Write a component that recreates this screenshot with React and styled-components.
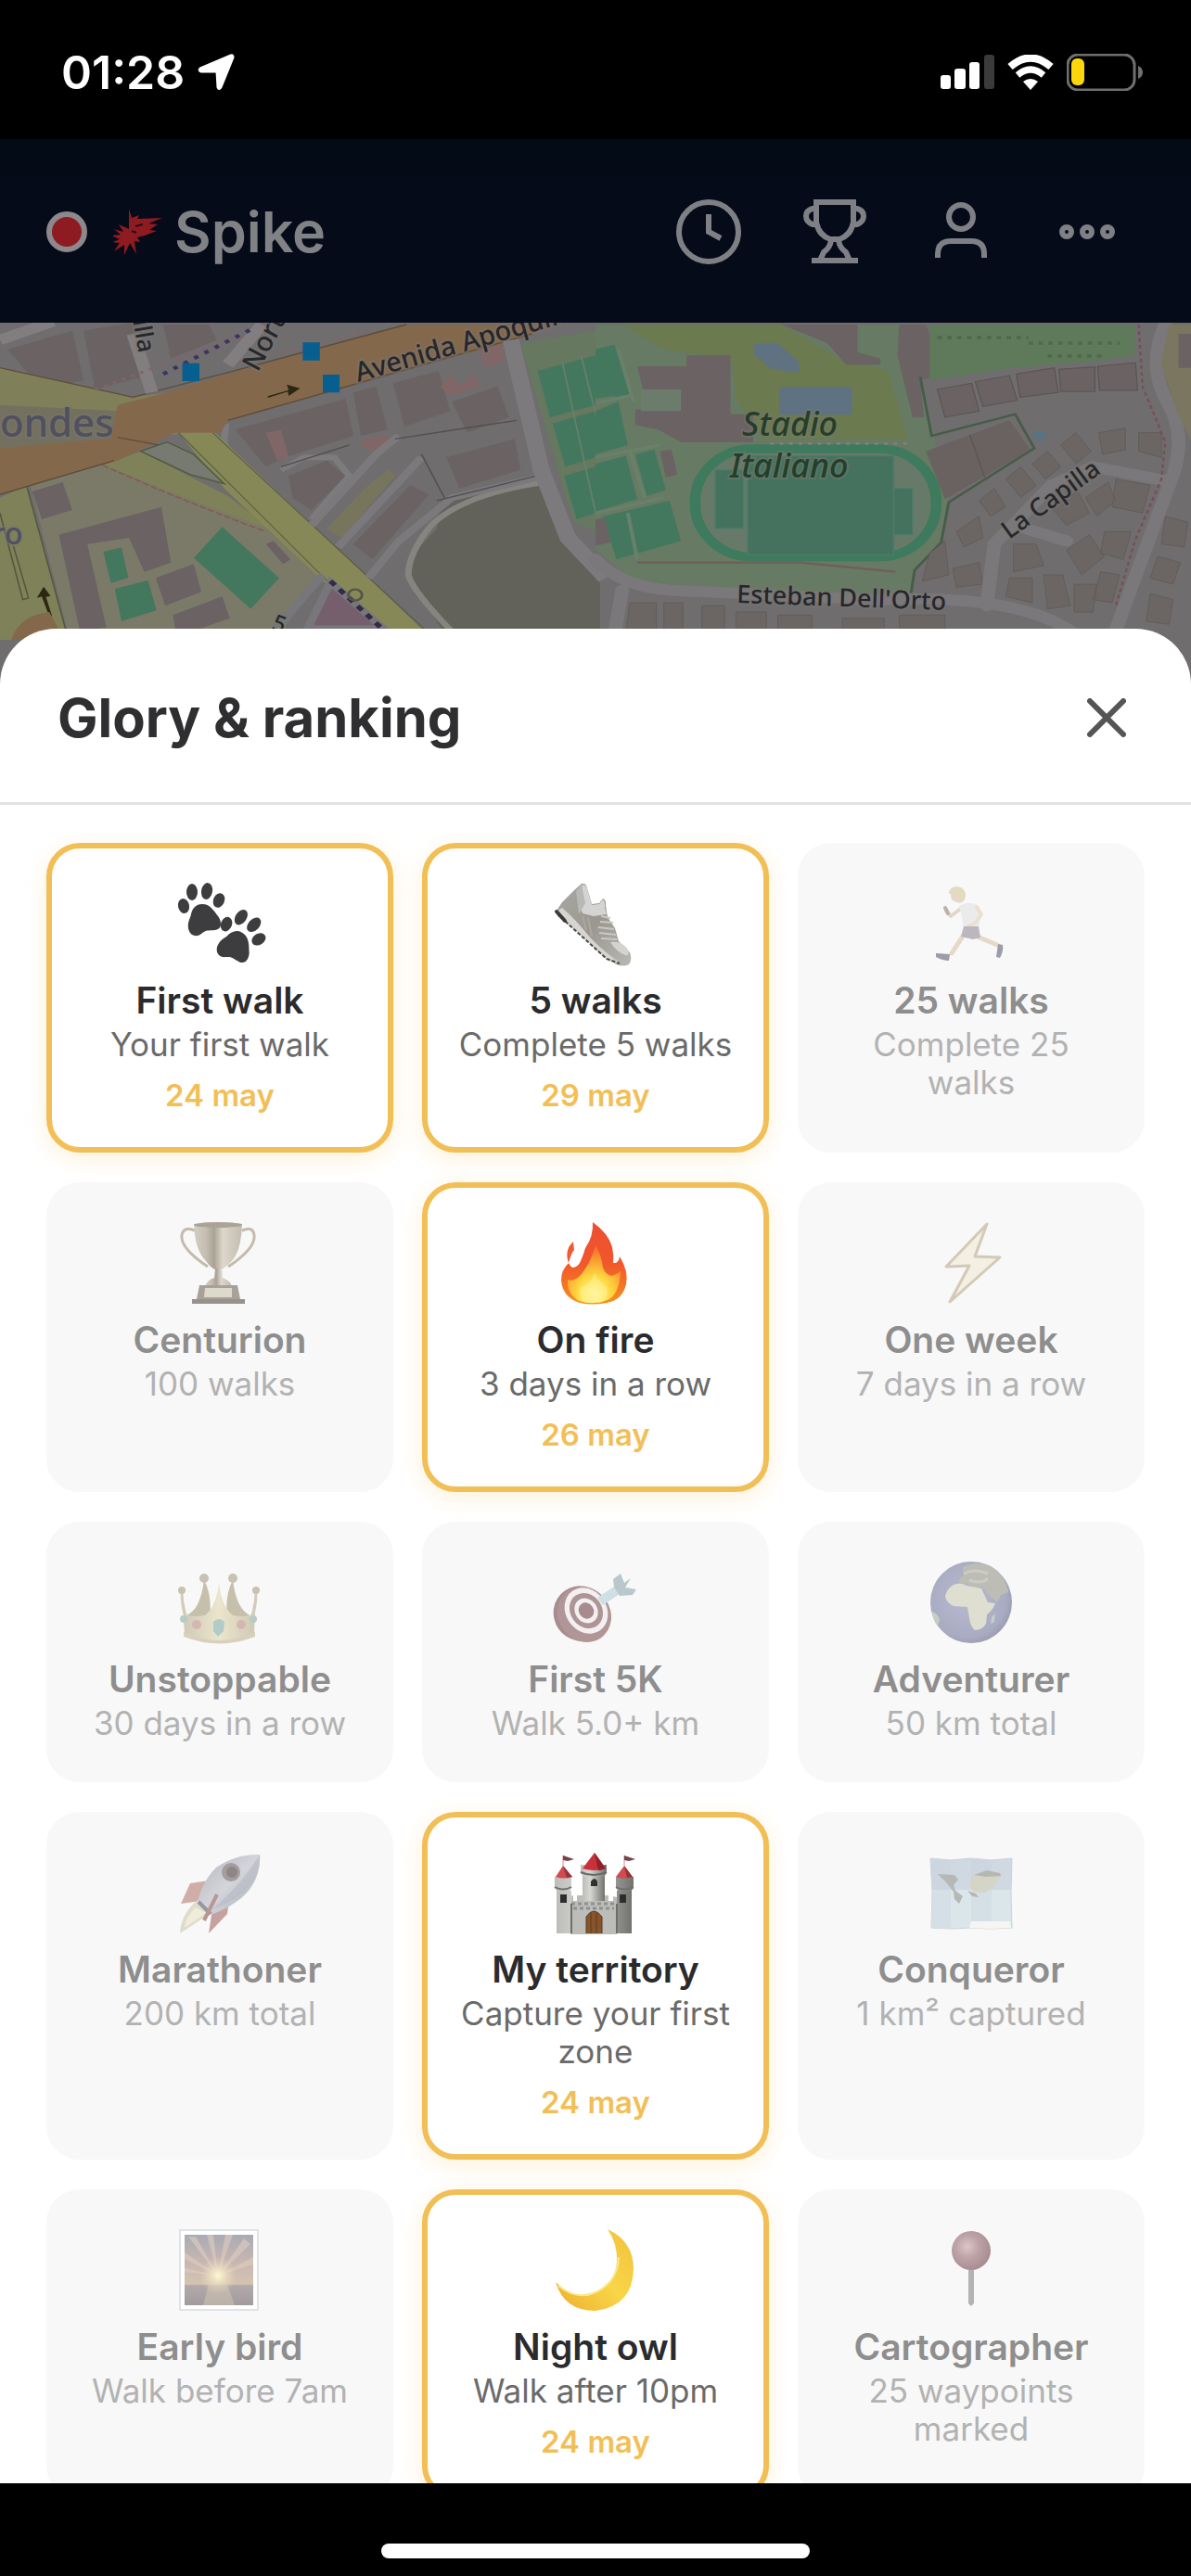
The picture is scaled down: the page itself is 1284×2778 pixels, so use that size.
import React from 'react';
import styled, { createGlobalStyle } from 'styled-components';

const GlobalStyle = createGlobalStyle`
  * {
    box-sizing: border-box;
  }

  body {
    margin: 0;
    background: #000;
    font-family: 'Inter', 'Liberation Sans', sans-serif;
  }

  h1, h2, h3, p, ul {
    margin: 0;
    padding: 0;
  }
`;

/* ---------- Achievement icons, all on an 88px grid ---------- */

const Paw = () => (
  <>
    <path d="M25 23c9 0 13 8 17 13s5 14-3 15-9-1-15 4-13 1-14-6 2-10 3-15 4-11 12-11z" />
    <ellipse cx="5" cy="25" rx="6" ry="8" transform="rotate(-12 5 25)" />
    <ellipse cx="14" cy="10" rx="6" ry="9" />
    <ellipse cx="30" cy="9" rx="6" ry="9" transform="rotate(10 30 9)" />
    <ellipse cx="43" cy="19" rx="6" ry="8" transform="rotate(24 43 19)" />
  </>
);

const PawsIcon = () => (
  <g fill="#3d3d3f">
    <Paw />
    <g transform="translate(38 30) rotate(34 26 33)">
      <Paw />
    </g>
  </g>
);

const ShoeIcon = () => (
  <>
    <defs>
      <linearGradient id="shoe" x1="0" y1="0" x2="1" y2="1">
        <stop offset="0" stopColor="#aaa9a5" />
        <stop offset=".5" stopColor="#99978f" />
        <stop offset="1" stopColor="#b9b8b4" />
      </linearGradient>
    </defs>
    <path d="M2 30L8 21 21 8 29 1q5-1 6 5l5 17 8-1 4-5q4 2 3 8l2 12 8 12 4 14 12 12q3 8-1 13-6 3-14 0L40 67 14 44 3 36z" fill="url(#shoe)" />
    <path d="M30 2q4 0 5 5l5 17 8-1 4-5q3 3 2 9l2 7-14 2-12-3-5-13z" fill="#d4d4d3" />
    <path d="M23 9l6-7 4 20-7 12z" fill="#b8b8b6" />
    <path d="M8 27q14 12 26 27t36 32q-8 1-14-3L34 62 14 44 3 35q0-6 5-8z" fill="#d6d5d1" />
    <path d="M3 33l11 11 20 18 22 20 14 5" fill="none" stroke="#4b4945" strokeWidth="2" strokeDasharray="4 2" />
    <path d="M2 31l9 10" stroke="#3a3a3a" strokeWidth="4" strokeLinecap="round" />
    <path d="M50 36l10 2M49 42l14 1M47 48l17 2M48 54l18 2M50 60l17 1" stroke="#c9c8c3" strokeWidth="2" />
    <path d="M60 64q12-2 19 8 2 8-3 6-10-4-16-14z" fill="#d4d3cf" />
    <path d="M36 38l4 20M30 36l4 15" stroke="#aaa89f" strokeWidth="2" />
  </>
);

const RunnerIcon = () => (
  <>
    <path d="M36 56l-13 20" stroke="#e6d9c8" strokeWidth="5" strokeLinecap="round" />
    <path d="M48 57l24 10" stroke="#e6d9c8" strokeWidth="5" strokeLinecap="round" />
    <path d="M34 27l-12 9-5-6" fill="none" stroke="#e0d5c8" strokeWidth="4" strokeLinecap="round" strokeLinejoin="round" />
    <path d="M16 27l3 6" stroke="#b9b3ac" strokeWidth="4" strokeLinecap="round" />
    <path d="M31 25q10-6 20-1l3 14-3 14q-9 3-15-2l-2-13z" fill="#ecebeb" />
    <path d="M50 26l5 8-6 9-8 4" fill="none" stroke="#eae0d2" strokeWidth="4" strokeLinecap="round" strokeLinejoin="round" />
    <path d="M36 47h16l2 12-8 2-13-3z" fill="#bab7be" />
    <circle cx="29" cy="14" r="7" fill="#e6d7c7" />
    <path d="M20 12q0-8 9-8 9 1 9 10-1 8-8 8l2-7-4-3z" fill="#e0dcc0" />
    <path d="M6 76l15 1-1 7q-7 0-14-4z" fill="#9c9da8" />
    <path d="M73 66l5 1q1 7-3 14l-4-1z" fill="#9c9da8" />
  </>
);

const CupIcon = () => (
  <>
    <defs>
      <linearGradient id="cup" x1="0" x2="1">
        <stop offset="0" stopColor="#d3cdc2" />
        <stop offset=".25" stopColor="#c5beb1" />
        <stop offset=".42" stopColor="#aaa296" />
        <stop offset=".6" stopColor="#ddd8cb" />
        <stop offset="1" stopColor="#c3bcb0" />
      </linearGradient>
    </defs>
    <path d="M17 9Q5 4 3 14q-2 14 28 34M68 9q12-5 13 5 2 14-28 34" fill="none" stroke="#c3bbac" strokeWidth="3" />
    <path d="M16 2q26-4 52 0-1 30-12 41-8 7-10 8h-7q-4-1-10-9Q17 30 16 2z" fill="url(#cup)" />
    <ellipse cx="42" cy="3" rx="26" ry="3" fill="#aba396" />
    <path d="M39 50h7l1 10q8 3 10 9H28q3-7 10-9z" fill="url(#cup)" />
    <path d="M22 68h41l3 15H19z" fill="#a8a199" />
    <path d="M28 71h29v10H27z" fill="#ddd9cb" />
    <path d="M14 83h57v5H14z" fill="#99928c" />
  </>
);

const FireIcon = () => (
  <>
    <defs>
      <linearGradient id="fire" x1="0" y1="0" x2="0" y2="1">
        <stop offset="0" stopColor="#ec4f32" />
        <stop offset=".5" stopColor="#f2562b" />
        <stop offset="1" stopColor="#f5921f" />
      </linearGradient>
      <radialGradient id="flame" cx=".5" cy=".85" r=".8">
        <stop offset="0" stopColor="#fffbc0" />
        <stop offset=".4" stopColor="#ffd83e" />
        <stop offset="1" stopColor="#f5702b" />
      </radialGradient>
    </defs>
    <path d="M41 0q17 12 21 27 2 9 1 17 6 1 7-7 10 16 7 30-4 17-21 20-16 3-29 0Q8 81 7 62q0-10 8-18 2 4 4 5 6 0 9-7 3-7 5-14 9-13 8-28z" fill="url(#fire)" />
    <path d="M20 21q-10 9-5 23 3-11 6-14z" fill="#ee5b34" />
    <path d="M44 25q5 8 7 18 1 13 10 15 7-2 10-5-1 25-14 31-15 6-31 1-13-8-12-23 7 3 15-6 10-13 15-31z" fill="url(#flame)" />
    <path d="M43 55q6 11 13 15 3 13-7 17H34q-10-5-6-17 11-2 15-15z" fill="#fff28a" opacity=".6" />
  </>
);

const BoltIcon = () => (
  <path d="M61 2L17 48l25-1-21 39 54-48-27-1z" fill="#f3efe3" stroke="#d3c9b6" strokeWidth="3" strokeLinejoin="round" />
);

const CrownIcon = () => (
  <>
    <defs>
      <linearGradient id="crown" x1="0" x2="1">
        <stop offset="0" stopColor="#cfc8b4" />
        <stop offset=".5" stopColor="#ebe5cd" />
        <stop offset="1" stopColor="#cfc8b4" />
      </linearGradient>
    </defs>
    <path d="M8 58q15-6 19-38 9 16 6 44zM77 58Q62 52 58 20q-9 16-6 44z" fill="#c6bfab" />
    <path d="M3 32l5 26q10 2 20 0 12-9 15-35 3 26 15 35 10 2 20 0l5-26-2 46q-38 18-75 0z" fill="url(#crown)" />
    <path d="M3 30q0 22 5 30M83 30q0 22-5 30" fill="none" stroke="#d3ccba" strokeWidth="3" />
    <g fill="#c8c2b3">
      <circle cx="27" cy="18" r="5" />
      <circle cx="58" cy="18" r="5" />
      <circle cx="3" cy="31" r="4" />
      <circle cx="83" cy="31" r="4" />
    </g>
    <path d="M5 76q38 18 77 0v5q-38 15-77 0z" fill="#d7d0bc" />
    <path d="M37 65q6-6 12 0l-1 10-6 6-5-6z" fill="#b0cbc8" />
    <circle cx="19" cy="68" r="5" fill="#d4b7b3" />
    <circle cx="67" cy="68" r="5" fill="#d4b7b3" />
    <circle cx="5" cy="62" r="4" fill="#b6ccc4" />
    <circle cx="80" cy="62" r="4" fill="#b6ccc4" />
  </>
);

const TargetIcon = () => (
  <>
    <ellipse cx="28" cy="56" rx="29" ry="30" transform="rotate(-35 28 56)" fill="#a98c8f" />
    <ellipse cx="32" cy="57" rx="28" ry="31" transform="rotate(-35 32 57)" fill="#b19698" />
    <ellipse cx="34" cy="53" rx="22" ry="26" transform="rotate(-35 34 53)" fill="#f4f0f1" />
    <ellipse cx="34" cy="53" rx="17" ry="20" transform="rotate(-35 34 53)" fill="#ad9596" />
    <ellipse cx="34" cy="53" rx="12" ry="14" transform="rotate(-35 34 53)" fill="#f4f0f1" />
    <ellipse cx="34" cy="53" rx="8" ry="9" transform="rotate(-35 34 53)" fill="#a88b8e" />
    <path d="M46 39l21-14 3 10-18 12z" fill="#d0dfe3" />
    <path d="M64 28l-1-9 8-6 4 10 7-5-6 10 12 2-4 6-14 1z" fill="#b9c8cd" />
  </>
);

const GlobeIcon = () => (
  <>
    <defs>
      <radialGradient id="sea" cx=".45" cy=".45" r=".6">
        <stop offset="0" stopColor="#b8bbd0" />
        <stop offset=".8" stopColor="#a9abc2" />
        <stop offset="1" stopColor="#9698ab" />
      </radialGradient>
    </defs>
    <circle cx="44" cy="44" r="44" fill="url(#sea)" />
    <path d="M30 21l6-7-1-8q15-7 30-1 16 10 19 28l-8 3-4 8-10-9-6-8-9 1-8-5-6 1z" fill="#bdbdb5" />
    <path d="M16 38q1-8 9-13 8-3 14 1l16 3 7 15 8 1q-3 8-9 12l-1 10q-4 7-12 7-5-4-6-13l-2-12-15-1q-7-3-9-10z" fill="#dedfd0" />
    <path d="M2 54q6 2 8 8l-2 8q-6-8-6-16zM66 60l4-4-1 9-4 2z" fill="#c6cdc4" />
    <path d="M36 13q12-6 26 0M42 20q14 5 20-2" fill="none" stroke="#cbccc3" strokeWidth="3" />
  </>
);

const RocketIcon = () => (
  <>
    <defs>
      <linearGradient id="rocket" x1="0" y1="0" x2="1" y2="1">
        <stop offset="0" stopColor="#b3b4bb" />
        <stop offset=".5" stopColor="#d3d5db" />
        <stop offset="1" stopColor="#a9abb4" />
      </linearGradient>
    </defs>
    <path d="M12 34l20-3-9 22-21 3z" fill="#d0aea7" />
    <path d="M36 62l18-9-2 14-20 21z" fill="#c5a29f" />
    <path d="M20 52Q2 67 1 88q14-9 33-22z" fill="#dedccb" />
    <path d="M18 60Q7 70 6 82q12-8 23-16z" fill="#efedd9" />
    <path d="M87 3q2 28-20 47Q50 63 34 68L20 54q5-22 20-37Q62 2 87 3z" fill="url(#rocket)" />
    <path d="M87 3q2 20-15 39-16 13-36 20 30-25 51-59z" fill="#b7b9c3" opacity=".6" />
    <circle cx="56" cy="22" r="10" fill="#a49c9d" />
    <circle cx="57" cy="22" r="6" fill="#8e8588" />
    <path d="M21 54l13 13" stroke="#96979d" strokeWidth="4" />
    <path d="M41 46l-14 28" stroke="#b89795" strokeWidth="4" />
  </>
);

const CastleIcon = () => (
  <>
    <defs>
      <linearGradient id="stone" x1="0" x2="1">
        <stop offset="0" stopColor="#bcbdb8" />
        <stop offset=".35" stopColor="#d6d6d2" />
        <stop offset="1" stopColor="#72736f" />
      </linearGradient>
    </defs>
    <path d="M17 48l3-1v6h4v-6h6v6h4v-6h14v6h5v-6h5v6h5v-5l4 1v40H17z" fill="#bcbdb9" />
    <path d="M18 56h48M20 61h44" stroke="#8e918f" strokeWidth="3" strokeDasharray="4 3" />
    <path d="M30 22h24v31H30z" fill="url(#stone)" />
    <path d="M28 14h28v9l-3 4H31l-3-4z" fill="url(#stone)" />
    <path d="M28 22q14 6 28 0" fill="none" stroke="#686965" strokeWidth="2" />
    <path d="M30 18L43 1l12 17q-12 4-25 0z" fill="#c9303a" />
    <path d="M43 1l12 17q-4 2-8 2z" fill="#8d222b" />
    <path d="M39 37v-5q4-6 7 0v5z" fill="#2f3030" />
    <path d="M2 42h16v46H2zM67 42h16v46H67z" fill="url(#stone)" />
    <path d="M0 27h18v12l-2 4H3l-3-4zM66 27h19v12l-3 4H69l-3-4z" fill="url(#stone)" />
    <path d="M0 38q9 5 18 0M66 38q9 5 19 0" fill="none" stroke="#70716c" strokeWidth="2" />
    <path d="M1 27l8-12 10 12q-9 3-18 0zM66 27l9-12 9 12q-9 3-18 0z" fill="#cf4a51" />
    <path d="M9 15l10 12-6 1zM75 15l9 12-6 1z" fill="#96333a" />
    <path d="M9 15V4M75 15V4" stroke="#d98b90" strokeWidth="1" />
    <path d="M9 4l12 4-7 2-5-1zM75 4l12 4-7 2-5-1z" fill="#774249" />
    <path d="M6 46h7v9H6zM70 46h7v9h-7z" fill="#2c2d2d" />
    <path d="M18 56v32M67 56v32" stroke="#6d6f6a" strokeWidth="2" />
    <path d="M34 88V70q8-12 17 0v18z" fill="#87552c" />
    <path d="M34 88V70q8-12 17 0v18M39 88V66M45 88V66" fill="none" stroke="#5c3a20" strokeWidth="1" />
  </>
);

const WorldMapIcon = () => (
  <>
    <path d="M0 7l22 2 22-2 22 2 22-2-1 37 1 38-22 1-22-1-22 1-21-1 1-38z" fill="#dbe6eb" stroke="#ccd2d6" />
    <path d="M0 7l22 2v74l-21-1 1-38zM44 7l22 2v74l-22-1z" fill="#d4dfe6" />
    <path d="M0 7l22 2 22-2 22 2 22-2-1 34H2z" fill="#c8d1dc" opacity=".6" />
    <path d="M42 82l2-7h42l1 7-21 1z" fill="#f5f5f4" />
    <path d="M8 24l18 1 4 5-5 6 2 6 8 6-4 8-5-5-1-8-8-10z" fill="#b5b8b4" />
    <path d="M42 36l5-11 14-4 17 3-5 6-5 8-9 6-12-1z" fill="#d4d5c6" />
    <path d="M47 25l14-5 14 3 1 3-16 1zM40 42l9 3 3 4-7-1z" fill="#b5b8b1" />
  </>
);

const SunriseIcon = () => (
  <>
    <defs>
      <linearGradient id="dawn" x1="0" y1="0" x2="0" y2="1">
        <stop offset="0" stopColor="#a9abb3" />
        <stop offset=".4" stopColor="#c8b7b2" />
        <stop offset=".7" stopColor="#d3c4b0" />
        <stop offset=".72" stopColor="#b3a9aa" />
        <stop offset="1" stopColor="#a19b9f" />
      </linearGradient>
      <radialGradient id="sun">
        <stop offset="0" stopColor="#fdfad5" />
        <stop offset="1" stopColor="#efdcb9" stopOpacity="0" />
      </radialGradient>
    </defs>
    <path d="M1 1h84v86H1z" fill="#fff" stroke="#dfe2e7" strokeWidth="2" />
    <path d="M6 6h74v76H6z" fill="url(#dawn)" />
    <path d="M42 50L6 32v-7zM42 50L10 8h8zM42 50L30 6h7zM42 50L50 6h8zM42 50L70 10l7 6zM42 50l38-20v8zM42 50L6 46v-4z" fill="#dfcdc0" opacity=".6" />
    <circle cx="42" cy="50" r="20" fill="url(#sun)" />
    <path d="M32 60h20l8 22H26z" fill="#dfd2b9" opacity=".4" />
  </>
);

const MoonIcon = () => (
  <>
    <defs>
      <linearGradient id="moon" x1="0" y1="1" x2="1" y2="0">
        <stop offset="0" stopColor="#ecae2d" />
        <stop offset=".5" stopColor="#f9d548" />
        <stop offset="1" stopColor="#f1c23b" />
      </linearGradient>
    </defs>
    <path d="M57 0q28 13 28 43-1 40-41 45Q10 88 1 57q18 18 37 14 27-8 29-36 1-19-10-35z" fill="url(#moon)" />
    <path d="M4 61q20 16 40 7 24-11 25-38" fill="none" stroke="#fbe98b" strokeWidth="2" />
  </>
);

const PinIcon = () => (
  <>
    <defs>
      <radialGradient id="pin" cx=".4" cy=".4" r=".6">
        <stop offset="0" stopColor="#dcc5c8" />
        <stop offset=".5" stopColor="#bda3a7" />
        <stop offset="1" stopColor="#a98d93" />
      </radialGradient>
    </defs>
    <path d="M41 44h6v36l-3 3-3-3z" fill="#b4b2b3" />
    <circle cx="44" cy="23" r="21" fill="url(#pin)" />
  </>
);

/* ---------- Map behind the sheet ---------- */

const CityMap = () => (
  <MapSvg viewBox="0 0 1284 390" preserveAspectRatio="xMidYMin slice" aria-hidden="true">
    <rect width="1284" height="390" fill="#6f6d6e" />
    {/* west side: avenue, school and reservoir */}
    <g transform="translate(0 -8) scale(.4095 .3333)">
      <path d="M80 550l190-70 430 210 150 140-140 250H190z" fill="#7b7a68" />
      <g fill="#6a6263">
        <path d="M20 110l170-60 30 160-110 30zM220 50l150-30 0 180-120 40zM430 30l120 0 20 50-120 60z" />
        <path d="M620 370l290-100 20 120-180 70-50 30zM930 250l60-20 30 140-70 20zM1035 220l120-40 30 130-120 50zM1190 280l120-50 30 100-110 50z" />
        <path d="M1175 460l180-60 15 100-160 60zM760 520l100-50 50 50-90 110-50-40zM930 740l150-190 50 30-150 210z" />
        <path d="M85 570l80-30 25 90-80 30zM155 710l270-90 25 180-70 30-40-110-110 20 50 270-70 10z" />
        <path d="M410 850l100-45 20 90-95 45zM455 970l130-60 20 70-140 60zM700 740l20-10 45 60-20 15z" />
      </g>
      <path d="M700 380l40-10 20 90-30 10zM945 410l70-25 15 30-60 25zM1160 230l30-40 20 40 40-40 10 40 70-20-150 50zM1255 80l70 0 0 70-50 20z" fill="#816668" />
      <path d="M640 560l-50-150 5-60M740 500l60-40 80 0 40 60-100 140" fill="none" stroke="#7d7b7d" strokeWidth="18" />
      <path d="M0 170l350 95 120-20 60 130-400 60L0 480z" fill="#7f8059" />
      <path d="M0 290l310 20v100L0 430z" fill="#74705f" />
      <path d="M270 485l100-45 230 145 240 225-140-120z" fill="#7f8259" />
      <path d="M470 380l80-20 560 654H985L590 560z" fill="#868957" />
      <path d="M470 380L1000 1030M560 380l570 650" stroke="#5b5c45" strokeWidth="3" />
      <path d="M0 590l70-40 110 500H0z" fill="#7f8259" />
      <path d="M70 550l110 500M0 640l60 280 15-5-40-170" fill="none" stroke="#55573e" strokeWidth="4" />
      <path d="M0 430l290-30 20-110 130-40 160-60 470-160h380l-60 40-400 130-100 40-290 100-20 40-120 0-150 90L0 580z" fill="#84684c" />
      <path d="M0 170l350 95 250-80L1070 30M0 580l300-110M600 340l800-280M310 395l130 30" fill="none" stroke="#5f4d38" strokeWidth="4" />
      <path d="M370 440l70-30 70 40 80 95-90-30z" fill="#777a70" stroke="#4f5a3c" strokeWidth="4" />
      <path d="M350 60l50 190M600 160l90-130M0 80l140-60" fill="none" stroke="#827e80" strokeWidth="34" />
      <path d="M270 485Q480 600 700 700" fill="none" stroke="#825d52" strokeWidth="5" strokeDasharray="18 6" />
      <path d="M250 240l400-180M740 120l230-70" stroke="#83636b" strokeWidth="8" strokeDasharray="10 16" />
      <path d="M430 190l240-150" stroke="#3f3263" strokeWidth="12" strokeDasharray="12 20" />
      <path d="M1160 600l270-60 60 190 90 120v220h-390L1080 850l10-80 60-80z" fill="#62625a" />
      <path d="M1435 540q-220 40-300 140-60 90-60 160 10 50 120 190" fill="none" stroke="#85847f" strokeWidth="17" />
      <path d="M820 680l170-230 60-60M890 750l220-290M970 850l80-120 140-140 240-70" fill="none" stroke="#7b797c" strokeWidth="22" />
      <path d="M740 490l180-70M1040 400l320-60M1110 450l60 140M1150 600l260-80" fill="none" stroke="#534f4f" strokeWidth="4" />
      <path d="M1345 80l80 420 70 220 100 130" fill="none" stroke="#7d7a7e" strokeWidth="44" />
      <path d="M860 690l100-130 60-60 20 20-140 200z" fill="#77765c" />
      <path d="M810 1014l60-150 140 150zM850 840l-140 200" fill="#755f6c" stroke="#77767a" strokeWidth="22" />
      <path d="M870 860l150 170" stroke="#322b45" strokeWidth="14" strokeDasharray="18 18" />
      <circle cx="935" cy="905" r="18" fill="none" stroke="#555547" strokeWidth="7" />
      <g fill="#43785f">
        <path d="M585 685l150 165-75 100-150-165zM272 765l48-14 18 98-46 18zM302 885l88-28 22 98-92 35z" />
      </g>
      <path d="M1370 90l200-40v650l-60-30-80-330z" fill="#66785f" />
      <path d="M1415 180l153-50v160l-120 40zM1455 350l113-40v150l-80 30zM1485 520l83-30v150l-50 20z" fill="#43785f" />
      <path d="M1480 150l90 500M1530 130l40 200" stroke="#69806b" strokeWidth="4" />
      <path d="M797 88h45v58h-45zM480 155h45v58h-45zM850 192h44v58h-44z" fill="#075f8f" />
      <path d="M705 262l55-20-5-18 35 12-30 25-2-14-53 20zM130 975l-20-65-13 4 18-36 18 30-12 3 16 62z" fill="#2b2710" />
      <path d="M30 1050q20-80 100-90l40 90z" fill="#84684c" />
    </g>
    {/* east side: sports club and houses */}
    <g transform="translate(642 -8) scale(.4095 .3333)">
      <path d="M0 30h870l-10 180 30 170 40 220-20 130-70 100-10 80-500-10L90 850 0 760z" fill="#677a63" />
      <path d="M70 30h420l150 110 130 40 50 220-380 0-70-130-10-130-180-30z" fill="#6c7a4f" />
      <path d="M420 90l60 0 55 60 0 35-70-10-50-50zM485 232h190v90H485z" fill="#5f7281" />
      <path d="M110 165h130v-35h115v190h60v90H225l-60-40-60-15v-50l120 0V240l-100 0z" fill="#6a6263" />
      <path d="M120 240h105v70H120z" fill="#6c7c6c" />
      <path d="M490 30h200v90l60 20 0 20h-90l-50-70zM800 30h70l45 160-60 20 10 120h-30l-40-200z" fill="#6a6263" />
      <path d="M880 30h540v100l-120 20-200 20-220 40z" fill="#5f7a5b" />
      <path d="M900 72h240M1140 90h240M1190 132h150" stroke="#4e6b49" strokeWidth="10" strokeDasharray="12 14" />
      <path d="M900 240l90-20 20 90-90 20zM1000 215l90-20 20 80-90 20zM1108 190l100-20 10 80-100 15zM1220 175l95-8 0 80-90 0zM1322 165l100-12 5 90-100 0z" fill="#6a6263" stroke="#5b5454" strokeWidth="3" />
      <path d="M855 200l30 190 220-70 50 110-225 175-20 130-70 90-10 80" fill="none" stroke="#465c48" strokeWidth="7" />
      <path d="M870 440l220-100 55 95-225 160z" fill="#6a6161" />
      <path d="M985 385l40 140" stroke="#5b5454" strokeWidth="3" />
      <g fill="#43785f">
        <path d="M0 110l50-15 40 160-30 15-10-10-50 10zM0 310l60-30 25 140L0 450zM0 480l80-25 30 140-110 40zM105 450l50-15 30 130-50 20zM20 650l175-50 30 130-170 60z" />
      </g>
      <path d="M0 285l90-25M0 460l170-40M0 640l180-50M60 110l40 170M90 440l40 150M85 640l25 150" stroke="#69806b" strokeWidth="10" />
      <rect x="262" y="432" width="635" height="350" rx="150" ry="172" fill="#677a69" stroke="#3e7a5d" strokeWidth="28" />
      <path d="M400 455h385v320H400zM315 500h75v190h-75zM785 560h50v150h-50z" fill="#44725e" stroke="#4f7c69" strokeWidth="4" />
      <path d="M460 415h370" stroke="#7f837b" strokeWidth="8" strokeDasharray="9 16" />
      <path d="M110 800h430l250 30" fill="none" stroke="#6f5f5a" strokeWidth="7" />
      <path d="M170 440l30-5 15 80-30 10zM0 660l25-5 15 80-40 10z" fill="#6a6263" />
      <g fill="#6b6564" stroke="#5f5955" strokeWidth="2">
        <path d="M1225 420l40-40 40 60-40 40zM1325 380l70-15 0 70-60 15zM1150 480l40-40 35 50-40 40zM1080 530l40-40 40 60-40 40zM1010 600l40-40 30 60-40 30zM950 700l60-50 10 70-50 30zM880 770l40-40 10 110-70 20zM940 820l70-20 10 70-70 10z" />
        <path d="M1200 620l70-50 30 70-60 40zM1290 590l60-50 20 60-50 50zM1370 530l90 20-20 90-80-20zM1100 740l60 0 20 70-80 20zM1240 760l60-50 40 70-60 60zM1340 700l70 0-20 90-60-20zM1090 850l60 0 0 80-70-20zM1180 840l50 0 20 100-60 10zM1260 870l60 0-10 90-50 0zM1330 830l50 10-20 90-50-10z" />
        <path d="M1480 780l60 20-20 70-60-20zM1460 900l60 20-10 80-60-10zM1500 650l60 20-10 80-60-10zM1430 380l60 0 0 80-60-20zM90 930l70 0 0 100-80 0zM180 930l50 0 0 100-50 0zM280 940l60 0 0 90-60 0zM370 960l80 0 0 70-80 0zM480 970l90 0 0 60-90 0zM650 980l110 0 0 50-110 0zM800 970l120 0 0 60-120 0z" />
      </g>
      <path d="M0 790q70 90 200 100l540 30q380-20 520 110M1500 30q-50 140 10 260 50 110 0 260l-150 500M1500 535l-190-45-110 60-150 190-20 200M1130 690l110 40M70 890l-20 140" fill="none" stroke="#7b787b" strokeWidth="36" strokeLinecap="round" />
      <path d="M1430 30l10 200 60 180-10 120-70 200-50 210" fill="none" stroke="#794f55" strokeWidth="6" strokeDasharray="12 10" />
      <path d="M1510 30h60v380l-40-100-40-150z" fill="#7a765f" />
      <path d="M1535 60h40v110h-40z" fill="#6a6263" />
      <circle cx="1170" cy="390" r="18" fill="#5c7280" />
    </g>
    <MapLabel $color="#50505f" $size={42} x="0" y="123">ondes</MapLabel>
    <MapLabel $color="#50505f" $size={32} x="-8" y="239">ro</MapLabel>
    <MapLabel $size={29} transform="translate(386 64) rotate(-16)">Avenida Apoquindo</MapLabel>
    <MapLabel $size={29} transform="translate(278 54) rotate(-62)">Norte</MapLabel>
    <MapLabel $size={26} transform="translate(136 -44) rotate(80)">Sevilla</MapLabel>
    <MapLabel $size={24} transform="translate(292 330) rotate(20)">5</MapLabel>
    <MapLabel $color="#243f29" $italic $size={36} x="800" y="122">Stadio</MapLabel>
    <MapLabel $color="#243f29" $italic $size={36} x="787" y="167">Italiano</MapLabel>
    <MapLabel $size={27} transform="translate(794 302) rotate(2)">Esteban Dell'Orto</MapLabel>
    <MapLabel $size={27} transform="translate(1088 234) rotate(-36)">La Capilla</MapLabel>
  </MapSvg>
);

const achievements = [
  { title: 'First walk', description: 'Your first walk', date: '24 may', Icon: PawsIcon },
  { title: '5 walks', description: 'Complete 5 walks', date: '29 may', Icon: ShoeIcon },
  { title: '25 walks', description: 'Complete 25 walks', Icon: RunnerIcon },
  { title: 'Centurion', description: '100 walks', Icon: CupIcon },
  { title: 'On fire', description: '3 days in a row', date: '26 may', Icon: FireIcon },
  { title: 'One week', description: '7 days in a row', Icon: BoltIcon },
  { title: 'Unstoppable', description: '30 days in a row', Icon: CrownIcon },
  { title: 'First 5K', description: 'Walk 5.0+ km', Icon: TargetIcon },
  { title: 'Adventurer', description: '50 km total', Icon: GlobeIcon },
  { title: 'Marathoner', description: '200 km total', Icon: RocketIcon },
  { title: 'My territory', description: 'Capture your first zone', date: '24 may', Icon: CastleIcon },
  { title: 'Conqueror', description: '1 km² captured', Icon: WorldMapIcon },
  { title: 'Early bird', description: 'Walk before 7am', Icon: SunriseIcon },
  { title: 'Night owl', description: 'Walk after 10pm', date: '24 may', Icon: MoonIcon },
  { title: 'Cartographer', description: '25 waypoints marked', Icon: PinIcon },
];

const AchievementCard = ({ title, description, date, Icon }) => (
  <Card $unlocked={Boolean(date)}>
    <BadgeIcon viewBox="0 0 88 88" aria-hidden="true">
      <Icon />
    </BadgeIcon>
    <CardTitle $unlocked={Boolean(date)}>{title}</CardTitle>
    <CardText $unlocked={Boolean(date)}>{description}</CardText>
    {date && <CardDate>{date}</CardDate>}
  </Card>
);

const App = () => {
  return (
    <Screen>
      <GlobalStyle />
      <StatusBar>
        <Clock>
          <span>01:28</span>
          <svg width="40" height="40" viewBox="0 0 40 40" aria-hidden="true">
            <path d="M36 2q2-1 2 2L25 36q-2 3-3 0l-1-17H4q-3-1-1-3z" fill="#fff" stroke="#fff" strokeWidth="3" strokeLinejoin="round" />
          </svg>
        </Clock>
        <StatusIcons>
          <svg width="58" height="38" viewBox="0 0 58 38" aria-hidden="true">
            <rect x="0" y="22" width="11" height="15" rx="3" fill="#fff" />
            <rect x="15" y="15" width="12" height="22" rx="3" fill="#fff" />
            <rect x="31" y="8" width="11" height="29" rx="3" fill="#fff" />
            <rect x="47" y="0" width="11" height="37" rx="3" fill="#3b3b3b" />
          </svg>
          <svg width="50" height="38" viewBox="0 0 50 38" aria-hidden="true">
            <path d="M3 13q22-19 44 0" fill="none" stroke="#fff" strokeWidth="8" />
            <path d="M11 22q14-12 28 0" fill="none" stroke="#fff" strokeWidth="7" />
            <path d="M17 29q8-6 16 0l-8 9z" fill="#fff" />
          </svg>
          <svg width="82" height="40" viewBox="0 0 82 40" aria-hidden="true">
            <rect x="1" y="1" width="72" height="38" rx="11" fill="none" stroke="#6f6f6f" strokeWidth="3" />
            <rect x="5" y="5" width="14" height="29" rx="6" fill="#fbd70b" />
            <path d="M77 13q5 2 5 7t-5 7z" fill="#6f6f6f" />
          </svg>
        </StatusIcons>
      </StatusBar>

      <AppHeader>
        <Brand>
          <RecordDot type="button" aria-label="Record" />
          <svg width="54" height="50" viewBox="0 0 54 50" aria-hidden="true">
            <path d="M17 0l3 10 8-3-2 4 27-1-15 6 10 1-9 6 8 1-13 5-8 2 3 5-6-1 2 14-7-12-6 13 0-11-11 7 6-9-8-1 8-3-9-4 10-1-7-6 10 3-5-8 11 5z" fill="#8f1b22" />
            <path d="M24 19l8-2M20 24l5 2" stroke="#2a0d16" strokeWidth="2" />
          </svg>
          <BrandName>Spike</BrandName>
        </Brand>
        <HeaderNav>
          <NavButton type="button" aria-label="History">
            <NavIcon viewBox="0 0 72 72">
              <circle cx="36" cy="36" r="32" />
              <path d="M36 17v19l13 7" />
            </NavIcon>
          </NavButton>
          <NavButton type="button" aria-label="Ranking">
            <NavIcon viewBox="0 0 72 72">
              <path d="M16 4h40v22q-3 14-15 18H31Q19 40 16 26zM16 11h-4q-7 2-7 8t7 9h5M56 11h4q7 2 7 8t-7 9h-5" />
              <path d="M32 45q-1 8-8 13l-4 9M40 45q1 8 8 13l4 9M11 67h50" />
            </NavIcon>
          </NavButton>
          <NavButton type="button" aria-label="Profile">
            <NavIcon viewBox="0 0 72 72">
              <circle cx="36" cy="20" r="13" />
              <path d="M11 64v-4q0-14 14-14h22q14 0 14 14v4" />
            </NavIcon>
          </NavButton>
          <NavButton type="button" aria-label="More">
            <NavIcon viewBox="0 0 72 72">
              <circle cx="14" cy="36" r="5" />
              <circle cx="36" cy="36" r="5" />
              <circle cx="58" cy="36" r="5" />
            </NavIcon>
          </NavButton>
        </HeaderNav>
      </AppHeader>

      <CityMap />

      <Sheet>
        <SheetHeader>
          <SheetTitle>Glory &amp; ranking</SheetTitle>
          <CloseButton type="button" aria-label="Close">
            <svg width="42" height="42" viewBox="0 0 42 42" aria-hidden="true">
              <path d="M3 3l36 36M39 3L3 39" stroke="#555" strokeWidth="6" strokeLinecap="round" />
            </svg>
          </CloseButton>
        </SheetHeader>
        <AchievementGrid>
          {achievements.map((item) => (
            <AchievementCard key={item.title} {...item} />
          ))}
        </AchievementGrid>
      </Sheet>

      <HomeArea>
        <HomeIndicator />
      </HomeArea>
    </Screen>
  );
};

const Screen = styled.div`
  display: flex;
  flex-direction: column;
  height: 100vh;
  overflow: hidden;
  background: #000;
`;

const StatusBar = styled.div`
  display: flex;
  flex: none;
  justify-content: space-between;
  align-items: center;
  height: 150px;
  padding: 6px 52px 0 66px;
  background: #000;
`;

const Clock = styled.div`
  display: flex;
  align-items: center;
  gap: 14px;
  color: #fff;
  font-size: 50px;
  font-weight: 600;
`;

const StatusIcons = styled.div`
  display: flex;
  align-items: center;
  gap: 14px;
`;

const AppHeader = styled.header`
  display: flex;
  flex: none;
  justify-content: space-between;
  align-items: center;
  height: 198px;
  padding: 2px 44px 0 50px;
  background: linear-gradient(#020c15, #050b18 20%);
`;

const Brand = styled.div`
  display: flex;
  align-items: center;
`;

const RecordDot = styled.button`
  width: 44px;
  height: 44px;
  margin-right: 28px;
  padding: 0;
  border: 6px solid #8c888b;
  border-radius: 50%;
  background: #8f1b22;
`;

const BrandName = styled.h1`
  margin-left: 12px;
  color: #808286;
  font-size: 61px;
  font-weight: 600;
`;

const HeaderNav = styled.nav`
  display: flex;
`;

const NavButton = styled.button`
  display: flex;
  justify-content: center;
  align-items: center;
  width: 136px;
  height: 136px;
  padding: 0;
  border: 0;
  background: none;
`;

const NavIcon = styled.svg`
  width: 72px;
  height: 72px;
  fill: none;
  stroke: #7e8086;
  stroke-width: 6px;
`;

const MapSvg = styled.svg`
  display: block;
  flex: none;
  width: 100%;
  height: 390px;
`;

const MapLabel = styled.text`
  fill: ${props => props.$color || '#26262b'};
  stroke: rgba(120, 118, 112, 0.5);
  stroke-width: 4px;
  paint-order: stroke;
  font-family: 'Noto Sans', sans-serif;
  font-size: ${props => props.$size}px;
  font-style: ${props => (props.$italic ? 'italic' : 'normal')};
  font-weight: 500;
`;

const Sheet = styled.section`
  position: relative;
  display: flex;
  flex: 1;
  flex-direction: column;
  min-height: 0;
  margin-top: -60px;
  overflow: hidden;
  border-radius: 60px 60px 0 0;
  background: #fff;
`;

const SheetHeader = styled.div`
  display: flex;
  flex: none;
  justify-content: space-between;
  align-items: center;
  height: 190px;
  padding: 4px 60px 0 62px;
  border-bottom: 3px solid #e2e2e2;
`;

const SheetTitle = styled.h2`
  color: #2f2f31;
  font-size: 58px;
  font-weight: 700;
`;

const CloseButton = styled.button`
  display: flex;
  justify-content: center;
  align-items: center;
  width: 62px;
  height: 62px;
  padding: 0;
  border: 0;
  background: none;
`;

const AchievementGrid = styled.div`
  display: grid;
  flex: 1;
  grid-template-columns: repeat(3, 1fr);
  align-content: start;
  gap: 32px 31px;
  min-height: 0;
  padding: 41px 50px;
  overflow-y: auto;
  scrollbar-width: none;
`;

const Card = styled.article`
  display: flex;
  flex-direction: column;
  align-items: center;
  padding: 37px 30px;
  border: 6px solid ${props => (props.$unlocked ? '#f2bf57' : '#f8f8f8')};
  border-radius: 36px;
  background: ${props => (props.$unlocked ? '#fff' : '#f8f8f8')};
  box-shadow: ${props => (props.$unlocked ? '0 6px 24px rgba(245, 190, 80, 0.22)' : 'none')};
  text-align: center;
`;

const BadgeIcon = styled.svg`
  width: 88px;
  height: 88px;
  overflow: visible;
`;

const CardTitle = styled.h3`
  margin-top: 17px;
  color: ${props => (props.$unlocked ? '#2b2b2d' : '#8e8e8e')};
  font-size: 39px;
  font-weight: 600;
  line-height: 44px;
`;

const CardText = styled.p`
  margin-top: 5px;
  color: ${props => (props.$unlocked ? '#6a6a6a' : '#b2b2b2')};
  font-size: 35px;
  line-height: 41px;
`;

const CardDate = styled.span`
  margin-top: 15px;
  color: #f2bf57;
  font-size: 33px;
  font-weight: 600;
  line-height: 38px;
`;

const HomeArea = styled.footer`
  display: flex;
  flex: none;
  justify-content: center;
  align-items: flex-end;
  height: 100px;
  padding-bottom: 19px;
  background: #000;
`;

const HomeIndicator = styled.div`
  width: 36%;
  height: 16px;
  border-radius: 8px;
  background: #fff;
`;

export default App;
